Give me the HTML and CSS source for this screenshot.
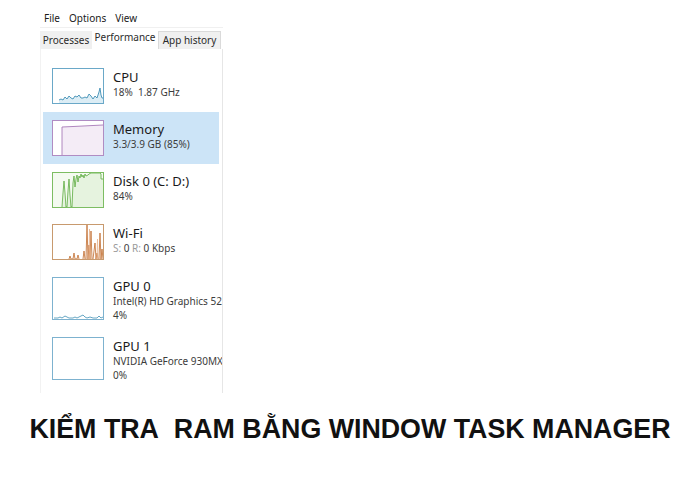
FILE: index.html
```html
<!DOCTYPE html>
<html lang="vi">
<head>
<meta charset="utf-8">
<title>Task Manager</title>
<link rel="stylesheet" href="styles.css">
</head>
<body>
<div class="window">
  <div class="menubar">
    <span class="menu">File</span>
    <span class="menu">Options</span>
    <span class="menu">View</span>
  </div>
  <div class="tabs">
    <div class="tab t1">Processes</div>
    <div class="tab t2 active">Performance</div>
    <div class="tab t3 boxed">App history</div>
  </div>
  <div class="panel">
    <div class="item">
      <div class="graph cpu">
        <svg viewBox="0 0 50 34" preserveAspectRatio="none">
          <polygon fill="#dcedf5" points="6,34 6,31 8,30 10,31 12,28 14,30 16,27 18,29 20,30 22,27 24,28 26,26 28,29 30,29 32,28 34,29 36,25 38,27 40,30 42,27 44,29 46,23 47,19 48,26 49,29 50,29 50,34"/>
          <polyline fill="none" stroke="#3f8fb4" stroke-width="0.9" points="6,31 8,30 10,31 12,28 14,30 16,27 18,29 20,30 22,27 24,28 26,26 28,29 30,29 32,28 34,29 36,25 38,27 40,30 42,27 44,29 46,23 47,19 48,26 49,29 50,29"/>
        </svg>
      </div>
      <div class="info">
        <div class="name">CPU</div>
        <div class="detail">18%&nbsp; 1.87 GHz</div>
      </div>
    </div>
    <div class="item selected">
      <div class="graph mem">
        <svg viewBox="0 0 50 34" preserveAspectRatio="none">
          <polygon fill="#f4ecf6" points="9,34 9,6 20,5.5 30,5 40,4.5 50,4 50,34"/>
          <polyline fill="none" stroke="#a77bb8" stroke-width="0.9" points="9,34 9,6 20,5.5 30,5 40,4.5 50,4"/>
        </svg>
      </div>
      <div class="info">
        <div class="name">Memory</div>
        <div class="detail">3.3/3.9 GB (85%)</div>
      </div>
    </div>
    <div class="item">
      <div class="graph disk">
        <svg viewBox="0 0 50 34" preserveAspectRatio="none">
          <polygon fill="#e6f3df" points="9,34 9,34 10,20 11,8 12,20 13,34 14,34 15,18 16,6 17,22 18,34 19,34 20,10 21,3 22,14 23,6 24,2 25,9 26,3 27,5 28,1 29,4 30,2 31,5 32,1 33,3 35,2 36,1 38,0 40,0 45,0 47,0 48,1 48,6 50,6 50,34"/>
          <polyline fill="none" stroke="#5cab3f" stroke-width="0.8" points="9,34 10,20 11,8 12,20 13,34 14,34 15,18 16,6 17,22 18,34 19,34 20,10 21,3 22,14 23,6 24,2 25,9 26,3 27,5 28,1 29,4 30,2 31,5 32,1 33,3 35,2 36,1 38,0 45,0 47,0 48,1 48,6 50,6"/>
        </svg>
      </div>
      <div class="info">
        <div class="name">Disk 0 (C: D:)</div>
        <div class="detail">84%</div>
      </div>
    </div>
    <div class="item">
      <div class="graph wifi">
        <svg viewBox="0 0 50 34" preserveAspectRatio="none">
          <g fill="none" stroke="#c06a2b" stroke-width="0.8">
            <polyline points="16,34 17,31 18,34 20,34 21,28 22,34 24,34 25,30 26,34"/>
            <polyline points="30,34 31,26 32,34"/>
            <polyline points="33,34 34,0 35,34 36,20 37,34 38,6 39,34"/>
            <polyline points="40,34 41,26 42,18 43,34 44,28 45,34"/>
            <polyline points="46,34 47,8 48,34 49,24 50,34"/>
          </g>
          <g fill="none" stroke="#e9b48e" stroke-width="0.7">
            <polyline points="36,34 36.5,4 37,34"/>
            <polyline points="44,34 44.5,14 45,34"/>
          </g>
        </svg>
      </div>
      <div class="info">
        <div class="name">Wi-Fi</div>
        <div class="detail"><span class="dim">S:</span> 0 <span class="dim">R:</span> 0 Kbps</div>
      </div>
    </div>
    <div class="item tall">
      <div class="graph gpu">
        <svg viewBox="0 0 50 41" preserveAspectRatio="none">
          <polyline fill="none" stroke="#3f8fb4" stroke-width="0.8" points="1,40 5,40 7,39 9,40 12,38 14,39 16,40 20,40 22,39 24,40 28,38 30,37 32,39 34,40 37,39 40,40 44,40 46,38 48,40 50,39"/>
        </svg>
      </div>
      <div class="info">
        <div class="name">GPU 0</div>
        <div class="detail">Intel(R) HD Graphics 52</div>
        <div class="detail">4%</div>
      </div>
    </div>
    <div class="item tall">
      <div class="graph gpu"></div>
      <div class="info">
        <div class="name">GPU 1</div>
        <div class="detail">NVIDIA GeForce 930MX</div>
        <div class="detail">0%</div>
      </div>
    </div>
  </div>
</div>
<h1 class="headline">KIỂM TRA&nbsp; RAM BẰNG WINDOW TASK MANAGER</h1>
</body>
</html>
```

FILE: styles.css
```css
html, body {
  margin: 0;
  padding: 0;
  background: #ffffff;
}
body {
  width: 700px;
  height: 477px;
  overflow: hidden;
  font-family: "Noto Sans", "Open Sans", sans-serif;
  color: #1a1a1a;
}
.window {
  margin-left: 40px;
  width: 183px;
}
.menubar {
  display: flex;
  gap: 9px;
  height: 28px;
  padding-left: 4px;
  align-items: flex-end;
  font-size: 10px;
  line-height: 14px;
  box-sizing: border-box;
  padding-bottom: 2px;
  border-bottom: 1px solid #f0f0f0;
}
.tabs {
  display: flex;
  height: 21px;
  padding-top: 3px;
  box-sizing: border-box;
  font-size: 10px;
  line-height: 18px;
  white-space: nowrap;
}
.tab {
  background: #f0f0f0;
  color: #2b2b2b;
  text-align: center;
  box-sizing: border-box;
}
.t1 { width: 52px; }
.t2 { width: 66px; }
.t3 { width: 63px; }
.tab.active {
  background: #ffffff;
  margin-top: -3px;
  line-height: 19px;
  padding-bottom: 2px;
}
.tab.boxed {
  border: 1px solid #dadada;
  border-bottom: none;
  line-height: 17px;
}
.panel {
  border-left: 1px solid #f2f2f2;
  border-right: 1px solid #e6e6e6;
  height: 344px;
  padding-top: 11px;
  padding-left: 2px;
  padding-right: 3px;
  box-sizing: border-box;
  overflow: hidden;
}
.item {
  display: flex;
  height: 52px;
  padding: 8px 0 8px 9px;
  box-sizing: border-box;
}
.item.selected {
  background: #cce4f7;
}
.item.tall {
  height: 60px;
  padding-top: 9px;
}
.graph {
  width: 52px;
  height: 36px;
  box-sizing: border-box;
  border: 1px solid #6aa8c8;
  background: #ffffff;
  flex: none;
}
.graph svg {
  display: block;
  width: 100%;
  height: 100%;
}
.graph.mem { border-color: #b08cc3; }
.graph.disk { border-color: #7dbd62; background: #f4faf0; }
.graph.wifi { border-color: #c89a6e; }
.graph.gpu { height: 43px; border-color: #7db2cf; }
.info {
  margin-left: 9px;
  white-space: nowrap;
  flex: 1;
  min-width: 0;
  margin-top: 1px;
  margin-right: -3px;
}
.name {
  font-size: 13px;
  line-height: 16px;
  color: #1a1a1a;
}
.detail {
  font-size: 10px;
  line-height: 14px;
  color: #3c3c3c;
}
.dim { color: #9a9a9a; }
.headline {
  margin: 0;
  margin-top: 21px;
  text-align: center;
  font-family: "Liberation Sans", Arial, sans-serif;
  font-weight: bold;
  font-size: 26.8px;
  line-height: 30px;
  color: #111111;
}
```
